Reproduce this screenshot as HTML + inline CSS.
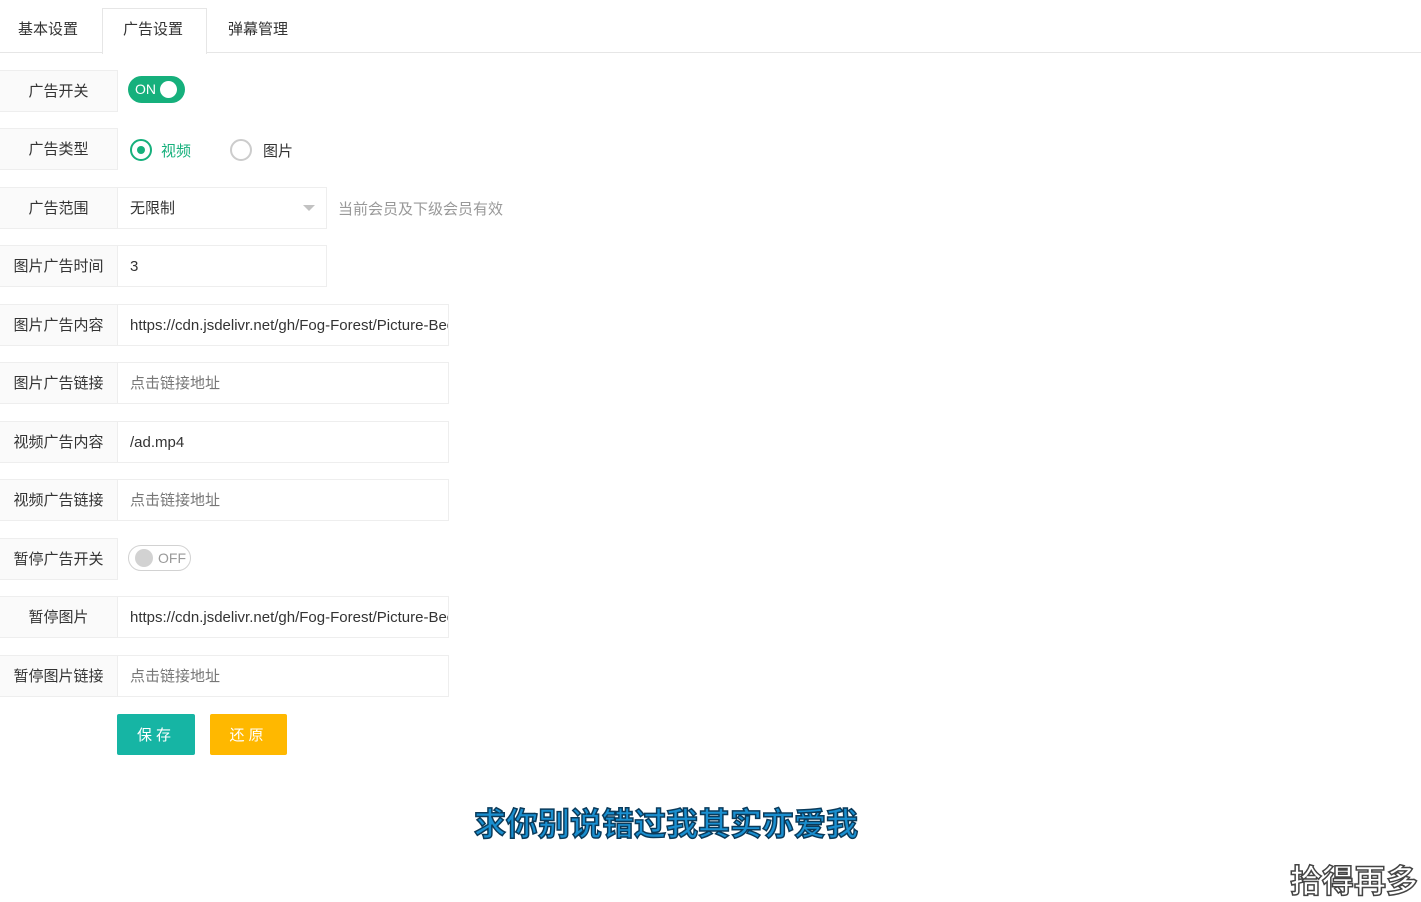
<!DOCTYPE html>
<html><head><meta charset="utf-8"><style>
*{box-sizing:border-box;margin:0;padding:0}
body{width:1421px;height:874px;overflow:hidden;background:#fff;font-family:"Liberation Sans","Noto Sans CJK SC",sans-serif;font-size:15px;color:#333;position:relative}
.a{position:absolute}
.tabbar{left:0;top:52px;width:1421px;height:1px;background:#e6e6e6}
.tab{top:9px;height:45px;line-height:42px;font-size:15px}
.lab{left:0;width:118px;height:42px;line-height:42px;text-align:center;background:#fafafa;border:1px solid #eee;border-left:none;white-space:nowrap}
.inp{left:117px;height:42px;line-height:42px;border:1px solid #eee;padding-left:12px;white-space:nowrap;overflow:hidden;color:#333}
.ph{color:#777}
.btn{top:714px;height:41px;line-height:43px;color:#fff;text-align:center;border-radius:2px;letter-spacing:4px;font-size:15px}
.dm{font-weight:bold;font-size:32px;color:#1a8fd0;-webkit-text-stroke:1.5px #0a3a5a;letter-spacing:0;white-space:nowrap}
</style></head><body>
<div class="a tabbar"></div>
<div class="a tab" style="left:18px">基本设置</div>
<div class="a" style="left:102px;top:8px;width:105px;height:46px;background:#fff;border:1px solid #e6e6e6;border-bottom:none"></div>
<div class="a tab" style="left:123px">广告设置</div>
<div class="a tab" style="left:228px">弹幕管理</div>

<div class="a lab" style="top:70px">广告开关</div>
<div class="a" style="left:128px;top:76px;width:57px;height:27px;border-radius:14px;background:#16b07c"></div>
<div class="a" style="left:135px;top:76px;line-height:27px;color:#fff;font-size:14px">ON</div>
<div class="a" style="left:160px;top:81px;width:17px;height:17px;border-radius:50%;background:#fff"></div>

<div class="a lab" style="top:128px">广告类型</div>
<div class="a" style="left:130px;top:139px;width:22px;height:22px;border-radius:50%;border:2px solid #16b07c"></div>
<div class="a" style="left:137px;top:146px;width:8px;height:8px;border-radius:50%;background:#16b07c"></div>
<div class="a" style="left:161px;top:140px;color:#16b07c">视频</div>
<div class="a" style="left:230px;top:139px;width:22px;height:22px;border-radius:50%;border:2px solid #ccc"></div>
<div class="a" style="left:263px;top:140px">图片</div>

<div class="a lab" style="top:187px">广告范围</div>
<div class="a inp" style="top:187px;width:210px">无限制</div>
<div class="a" style="left:303px;top:205px;border:6px solid transparent;border-top:6px solid #c2c2c2;border-bottom:none"></div>
<div class="a" style="left:338px;top:198px;color:#999">当前会员及下级会员有效</div>

<div class="a lab" style="top:245px">图片广告时间</div>
<div class="a inp" style="top:245px;width:210px">3</div>

<div class="a lab" style="top:304px">图片广告内容</div>
<div class="a inp" style="top:304px;width:332px">https://cdn.jsdelivr.net/gh/Fog-Forest/Picture-Bed</div>

<div class="a lab" style="top:362px">图片广告链接</div>
<div class="a inp ph" style="top:362px;width:332px">点击链接地址</div>

<div class="a lab" style="top:421px">视频广告内容</div>
<div class="a inp" style="top:421px;width:332px">/ad.mp4</div>

<div class="a lab" style="top:479px">视频广告链接</div>
<div class="a inp ph" style="top:479px;width:332px">点击链接地址</div>

<div class="a lab" style="top:538px">暂停广告开关</div>
<div class="a" style="left:128px;top:545px;width:63px;height:26px;border-radius:13px;border:1px solid #d2d2d2;background:#fff"></div>
<div class="a" style="left:135px;top:549px;width:18px;height:18px;border-radius:50%;background:#d2d2d2"></div>
<div class="a" style="left:158px;top:545px;line-height:26px;color:#999;font-size:14px">OFF</div>

<div class="a lab" style="top:596px">暂停图片</div>
<div class="a inp" style="top:596px;width:332px">https://cdn.jsdelivr.net/gh/Fog-Forest/Picture-Bed</div>

<div class="a lab" style="top:655px">暂停图片链接</div>
<div class="a inp ph" style="top:655px;width:332px">点击链接地址</div>

<div class="a btn" style="left:117px;width:78px;background:#16b5a4">保存</div>
<div class="a btn" style="left:210px;width:77px;background:#ffb800">还原</div>

<div class="a dm" style="left:474px;top:799px">求你别说错过我其实亦爱我</div>
<div class="a dm" style="left:1290px;top:856px;color:#fff;-webkit-text-stroke:1.5px #444">拾得再多</div>
</body></html>
